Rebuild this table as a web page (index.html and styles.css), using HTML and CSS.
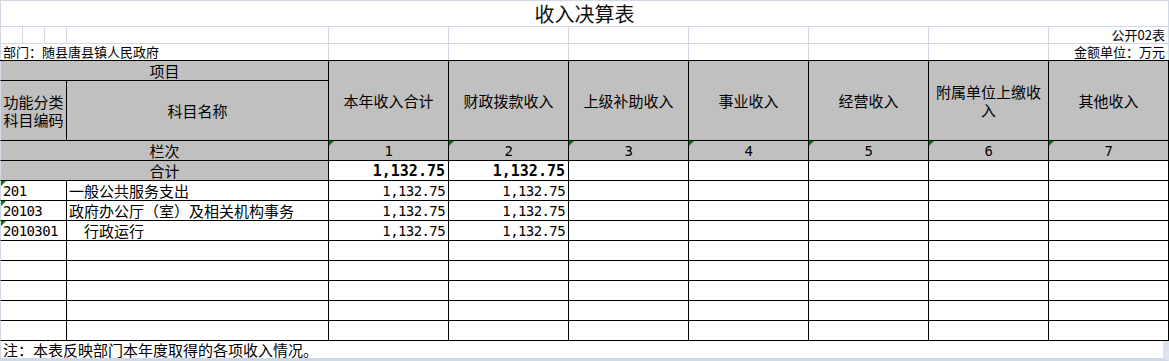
FILE: index.html
```html
<!DOCTYPE html>
<html lang="zh-CN">
<head>
<meta charset="utf-8">
<title>收入决算表</title>
<link rel="stylesheet" href="styles.css">
</head>
<body>
<div class="sheet">
  <div class="top">
    <div class="title">收入决算表</div>
    <div class="row2">
      <div class="g"></div><div class="g"></div><div class="g"></div><div class="g"></div>
      <div class="g"></div><div class="g"></div><div class="g"></div><div class="g"></div>
      <div class="g"></div><div class="g"></div>
      <div class="g ra">公开02表</div>
    </div>
    <div class="row3">
      <div class="g dept">部门：随县唐县镇人民政府</div>
      <div class="g"></div><div class="g"></div><div class="g"></div><div class="g"></div>
      <div class="g"></div><div class="g"></div>
      <div class="g ra">金额单位：万元</div>
    </div>
  </div>

  <div class="tbl">
    <div class="h c2 first">项目</div>
    <div class="h s2">本年收入合计</div>
    <div class="h s2">财政拨款收入</div>
    <div class="h s2">上级补助收入</div>
    <div class="h s2">事业收入</div>
    <div class="h s2">经营收入</div>
    <div class="h s2">附属单位上缴收入</div>
    <div class="h s2">其他收入</div>

    <div class="h first tight">功能分类科目编码</div>
    <div class="h">科目名称</div>

    <div class="h c2 first">栏次</div>
    <div class="h num tri">1</div>
    <div class="h num tri">2</div>
    <div class="h num tri">3</div>
    <div class="h num tri">4</div>
    <div class="h num tri">5</div>
    <div class="h num tri">6</div>
    <div class="h num tri">7</div>

    <div class="h c2 first">合计</div>
    <div class="v bold">1,132.75</div>
    <div class="v bold">1,132.75</div>
    <div></div><div></div><div></div><div></div><div></div>

    <div class="first code num tri">201</div>
    <div class="name">一般公共服务支出</div>
    <div class="v num">1,132.75</div>
    <div class="v num">1,132.75</div>
    <div></div><div></div><div></div><div></div><div></div>

    <div class="first code num tri">20103</div>
    <div class="name">政府办公厅（室）及相关机构事务</div>
    <div class="v num">1,132.75</div>
    <div class="v num">1,132.75</div>
    <div></div><div></div><div></div><div></div><div></div>

    <div class="first code num tri">2010301</div>
    <div class="name indent">行政运行</div>
    <div class="v num">1,132.75</div>
    <div class="v num">1,132.75</div>
    <div></div><div></div><div></div><div></div><div></div>

    <div class="first"></div><div></div><div></div><div></div><div></div><div></div><div></div><div></div><div></div>
    <div class="first"></div><div></div><div></div><div></div><div></div><div></div><div></div><div></div><div></div>
    <div class="first"></div><div></div><div></div><div></div><div></div><div></div><div></div><div></div><div></div>
    <div class="first"></div><div></div><div></div><div></div><div></div><div></div><div></div><div></div><div></div>
    <div class="first"></div><div></div><div></div><div></div><div></div><div></div><div></div><div></div><div></div>
  </div>

  <div class="note">注：本表反映部门本年度取得的各项收入情况。</div>
</div>
</body>
</html>
```

FILE: styles.css
```css
* {
  box-sizing: border-box;
  margin: 0;
  padding: 0;
}

html, body {
  background: #ffffff;
}

body {
  margin: 0;
  font-family: "Noto Sans CJK SC", "Noto Sans", sans-serif;
  color: #000000;
  overflow: hidden;
}

.sheet {
  width: 1169px;
}

/* ---------- top area (light grid) ---------- */
.top {
  border-top: 1px solid #d0d7e5;
}

.title {
  height: 26px;
  border-left: 1px solid #d0d7e5;
  border-right: 1px solid #d0d7e5;
  border-bottom: 1px solid #d0d7e5;
  display: flex;
  align-items: center;
  justify-content: center;
  font-size: 20px;
  line-height: 24px;
  color: #111111;
  padding-top: 1px;
}

.row2,
.row3 {
  display: grid;
  grid-template-columns: 23px 22px 22px 262px repeat(7, 120px);
}

.row2 {
  height: 17px;
  border-bottom: 1px solid #d0d7e5;
}

.row3 {
  height: 16px;
}

.g {
  border-right: 1px solid #d0d7e5;
  font-size: 13px;
  line-height: 16px;
  white-space: nowrap;
  display: flex;
  align-items: center;
}

.row2 .g:first-child,
.row3 .g:first-child {
  border-left: 1px solid #d0d7e5;
}

.dept {
  grid-column: span 4;
  padding-left: 2px;
}

.ra {
  justify-content: flex-end;
  padding-right: 3px;
}

/* ---------- main table ---------- */
.tbl {
  display: grid;
  grid-template-columns: 67px 262px repeat(7, 120px);
  grid-template-rows: 20px 60px repeat(10, 20px);
  border-top: 1px solid #000000;
}

.tbl > div {
  border-right: 1px solid #000000;
  border-bottom: 1px solid #000000;
  display: flex;
  align-items: center;
  font-size: 15px;
  line-height: 18px;
  position: relative;
  background: #ffffff;
}

.tbl > .first {
  border-left: 1px solid #d0d7e5;
}

.tbl > .h {
  background: #c0c0c0;
  justify-content: center;
  text-align: center;
  padding: 0 3px;
}

.tbl > .h.tight {
  padding: 0;
}

.c2 {
  grid-column: span 2;
}

.s2 {
  grid-row: span 2;
}

.tbl > .num {
  font-family: "DejaVu Sans Mono", "Liberation Mono", monospace;
  font-size: 14px;
  letter-spacing: -0.6px;
}

.tbl > .code {
  padding-left: 2px;
}

.tbl > .name {
  padding-left: 2px;
  white-space: nowrap;
}

.tbl > .name.indent {
  padding-left: 17px;
}

.tbl > .v {
  justify-content: flex-end;
  padding-right: 3px;
}

.tbl > .bold {
  font-family: "DejaVu Sans Mono", "Liberation Mono", monospace;
  font-weight: bold;
  font-size: 15px;
  padding-right: 3px;
}

.tri::before {
  content: "";
  position: absolute;
  top: 0;
  left: 0;
  width: 0;
  height: 0;
  border-top: 5px solid #008000;
  border-right: 5px solid transparent;
}

/* ---------- footer note ---------- */
.note {
  height: 20px;
  border-left: 1px solid #d0d7e5;
  border-right: 6px solid #dde3ee;
  border-bottom: 3px solid #d0d7e5;
  font-size: 15px;
  line-height: 17px;
  padding-left: 2px;
  display: flex;
  align-items: center;
  white-space: nowrap;
}
```
